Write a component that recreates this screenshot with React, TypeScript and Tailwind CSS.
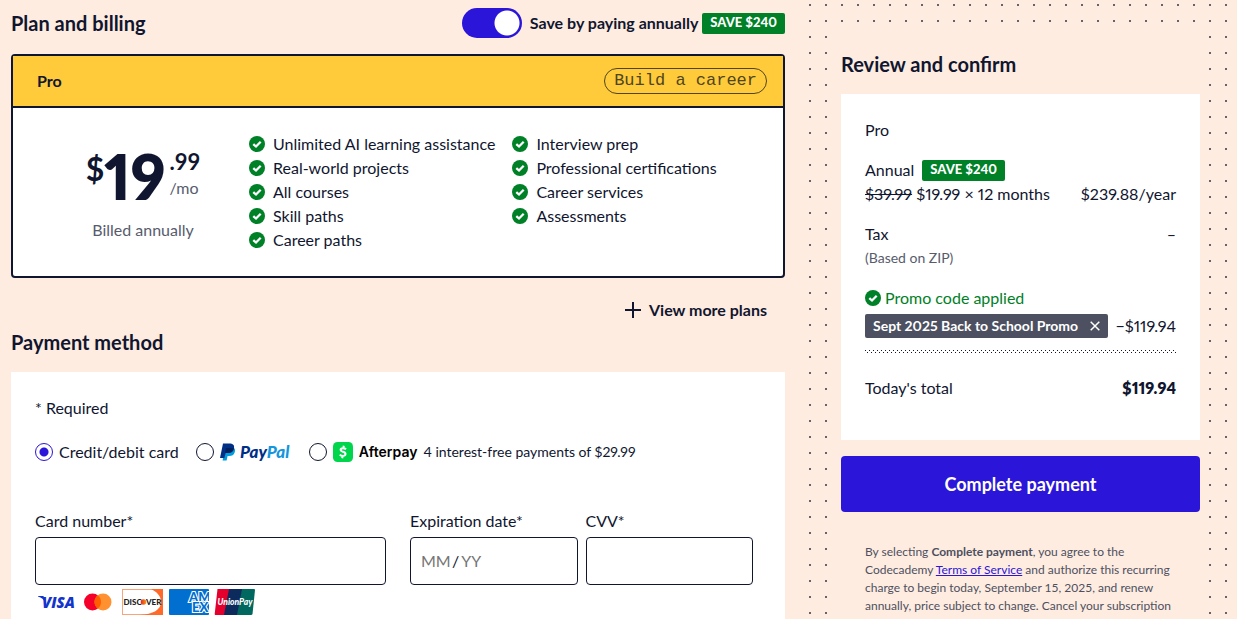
import type { ReactNode } from "react";

const included = [
  ["Unlimited AI learning assistance", "Real-world projects", "All courses", "Skill paths", "Career paths"],
  ["Interview prep", "Professional certifications", "Career services", "Assessments"],
];

function CheckBadge() {
  return (
    <svg className="size-4 shrink-0" viewBox="0 0 16 16" aria-hidden="true">
      <circle cx="8" cy="8" r="8" fill="#008027" />
      <path d="M4.3 8.1 L7 10.5 L11.7 5.7" fill="none" stroke="#fff" strokeWidth="2.3" />
    </svg>
  );
}

function SaveBadge() {
  return (
    <span className="inline-flex h-[21px] items-center rounded-xs bg-[#008027] px-2 pb-0.5 text-[13px] leading-4 font-black whitespace-nowrap text-white proportional-nums">
      SAVE $240
    </span>
  );
}

function Heading({ children }: { children: ReactNode }) {
  return <h2 className="text-xl leading-7 font-bold">{children}</h2>;
}

function BillingToggle() {
  return (
    <div className="flex items-center gap-1">
      <label className="flex items-center gap-2 text-base leading-6 font-bold">
        <input
          type="checkbox"
          role="switch"
          defaultChecked
          className="h-[30px] w-[60px] shrink-0 appearance-none rounded-full bg-[#6a6e75] bg-[radial-gradient(circle_at_15px_15px,white_12px,transparent_13px)] checked:bg-[#2a15d9] checked:bg-[radial-gradient(circle_at_45px_15px,white_12px,transparent_13px)]"
        />
        Save by paying annually
      </label>
      <SaveBadge />
    </div>
  );
}

function PlanCard() {
  return (
    <article className="mt-4 rounded-sm border-2 border-[#10162f] bg-white">
      <header className="flex h-[52px] items-center justify-between border-b-2 border-[#10162f] bg-[#ffcb3a] pr-4 pl-6">
        <h3 className="text-base leading-6 font-bold">Pro</h3>
        <span className="rounded-full border border-[#4f4520] px-[9px] font-['Liberation_Mono',monospace] text-[17px] leading-6 text-[#4f4520]">
          Build a career
        </span>
      </header>
      <div className="flex p-6">
        <div className="flex w-[212px] shrink-0 flex-col items-center pt-3.5">
          <p className="flex h-16 items-start font-bold">
            <span className="text-[32px] leading-[46px]">$</span>
            <span className="text-[62px] leading-[60px] font-extrabold proportional-nums">19</span>
            <span className="ml-1 flex flex-col gap-0.5">
              <span className="text-[22px] leading-8">.99</span>
              <span className="text-base leading-4 font-normal text-[#575c6d]">/mo</span>
            </span>
          </p>
          <p className="mt-2 text-base leading-6 text-[#575c6d]">Billed annually</p>
        </div>
        <div className="flex gap-[17px]">
          {included.map((column) => (
            <ul key={column[0]}>
              {column.map((item) => (
                <li key={item} className="flex items-center gap-2 text-base leading-6">
                  <CheckBadge />
                  {item}
                </li>
              ))}
            </ul>
          ))}
        </div>
      </div>
    </article>
  );
}

function Method({ checked, children }: { checked?: boolean; children: ReactNode }) {
  return (
    <label className="flex items-center gap-1.5">
      <input
        type="radio"
        name="method"
        defaultChecked={checked}
        className="size-[18px] shrink-0 appearance-none rounded-full border border-[#10162f] bg-white checked:border-[#2a15d9] checked:bg-[radial-gradient(circle,#2a15d9_4px,white_5px)]"
      />
      {children}
    </label>
  );
}

function PayPalLogo() {
  return (
    <svg className="h-5 w-[72px]" viewBox="0 0 72 20" role="img" aria-label="PayPal">
      <path d="M5 5 H11 C14.5 5 15.6 7.4 14.8 10 C14 13 11.8 14 9.2 14 H7.6 L6.6 18.5 H2.6 Z" fill="#009cde" />
      <path d="M3 1.500 H9.2 C13 1.500 14.6 3 14 6.2 C13.4 9.6 11 11 7.8 11 H5.6 L4.4 16 H0 Z" fill="#002f86" />
      <path d="M6 6 H12 L13.9 6.4 C13.2 9.6 11 11 7.8 11 H5 Z" fill="#011f5b" />
      <text x="20" y="16" fontFamily="Lato, sans-serif" fontSize="17" fontWeight="900" fontStyle="italic" fill="#002f86">
        Pay<tspan fill="#1496dc">Pal</tspan>
      </text>
    </svg>
  );
}

function CashIcon() {
  return (
    <svg className="size-5" viewBox="0 0 20 20" aria-hidden="true">
      <rect width="20" height="20" rx="4.500" fill="#00d64b" />
      <path
        d="M13 7.2 C11.6 5.9 7.6 5.6 7.6 7.9 C7.6 10.2 12.7 9.2 12.5 12 C12.3 14.5 8.3 14.3 6.800 12.6 M10.8 3.800 L10.4 6 M9.600 14 L9.2 16.2"
        fill="none"
        stroke="#fff"
        strokeWidth="2"
      />
    </svg>
  );
}

function CardBrands() {
  return (
    <svg className="mt-1 h-[26px] w-[220px]" viewBox="0 0 220 26" role="img" aria-label="Visa, Mastercard, Discover, Amex, UnionPay">
      <defs>
        <linearGradient id="orb">
          <stop offset="0" stopColor="#e0241c" />
          <stop offset="1" stopColor="#f79a20" />
        </linearGradient>
        <clipPath id="amex">
          <rect x="134" width="40" height="26" rx="1" />
        </clipPath>
      </defs>
      <path d="M3 7 H8.500 L10.500 14 C9 10.500 6.500 8.500 3 7.500 Z" fill="#1434cb" />
      <text x="7" y="19" fontFamily="Open Sans, sans-serif" fontSize="15" fontWeight="800" fontStyle="italic" fill="#1434cb">
        VISA
      </text>
      <circle cx="57.500" cy="13" r="8.500" fill="#f5002b" />
      <circle cx="68" cy="13" r="8.500" fill="#ff9130" />
      <path d="M62.750 6.300 A8.500 8.500 0 0 1 62.750 19.700 A8.500 8.500 0 0 1 62.750 6.300" fill="#ff5f00" />

      <rect x="87.500" y=".5" width="40" height="25" fill="#fff" stroke="#f9a57c" />
      <path d="M116 0 H128 V26 H105 C118 25 126 21 126 13 C126 7 122 3 116 0 Z" fill="#ff6a2b" />
      <text x="88.500" y="16" fontFamily="Lato, sans-serif" fontSize="8" fontWeight="900" fill="#222">
        DISC
      </text>
      <circle cx="108.500" cy="13" r="2.800" fill="url(#orb)" />
      <text x="111" y="16" fontFamily="Lato, sans-serif" fontSize="8" fontWeight="900" fill="#222">
        VER
      </text>

      <g clipPath="url(#amex)">
        <rect x="134" width="40" height="26" fill="#016fd0" />
        <g fontFamily="Lato, sans-serif" fontSize="13" fontWeight="900" fill="#016fd0" stroke="#fff" strokeWidth="2.200" paintOrder="stroke">
          <text x="154" y="12.500">AM</text>
          <text x="157" y="23">EX</text>
        </g>
      </g>

      <path d="M182.500 0 H195 L190 26 H180.500 Q179.500 26 179.700 25 Z" fill="#e3002c" />
      <path d="M194 0 H208 L203 26 H189 Z" fill="#0c2a5c" />
      <path d="M207 0 H219 Q220 0 220 1 L217.500 25 Q217.300 26 216 26 H202 Z" fill="#00685e" />
      <text x="182.500" y="15.500" fontFamily="Lato, sans-serif" fontSize="8.500" fontWeight="900" fontStyle="italic" fill="#fff">
        UnionPay
      </text>
    </svg>
  );
}

function Field({ id, label }: { id: string; label: string }) {
  return (
    <div className="min-w-0">
      <label htmlFor={id} className="block text-base leading-6">
        {label}
      </label>
      <input id={id} className="mt-1 block h-12 w-full rounded-sm border border-[#10162f] bg-white px-2.5 text-base" />
    </div>
  );
}

function ExpirationField() {
  return (
    <div className="min-w-0">
      <label htmlFor="month" className="block text-base leading-6">
        Expiration date*
      </label>
      <div className="mt-1 flex h-12 items-center rounded-sm border border-[#10162f] bg-white px-2.5 text-base">
        <input id="month" placeholder="MM" className="w-[31px] placeholder:text-[#757575]" />
        <span aria-hidden="true">/</span>
        <input aria-label="Expiration year" placeholder="YY" className="ml-0.5 w-8 placeholder:text-[#757575]" />
      </div>
    </div>
  );
}

function PaymentMethod() {
  return (
    <section className="mt-1.5">
      <Heading>Payment method</Heading>
      <form className="mt-4 bg-white pt-6 pr-8 pb-1 pl-6">
        <p className="text-base leading-6">* Required</p>
        <div className="mt-5 flex h-6 items-center gap-[17px] text-base leading-6 whitespace-nowrap">
          <Method checked>Credit/debit card</Method>
          <Method>
            <PayPalLogo />
          </Method>
          <Method>
            <CashIcon />
            <span className="font-['Inter',sans-serif] text-sm leading-5 font-semibold text-black">Afterpay</span>
            <span className="text-sm leading-5 proportional-nums">4 interest-free payments of $29.99</span>
          </Method>
        </div>
        <div className="mt-[45px] grid grid-cols-[351fr_343fr] gap-6">
          <Field id="card" label="Card number*" />
          <div className="grid grid-cols-2 gap-2">
            <ExpirationField />
            <Field id="cvv" label="CVV*" />
          </div>
        </div>
        <CardBrands />
      </form>
    </section>
  );
}

function OrderSummary() {
  return (
    <div className="mt-4 bg-white px-6 pt-6 pb-10 text-base leading-6 proportional-nums">
      <p>Pro</p>
      <div className="mt-4 flex items-end justify-between">
        <div>
          <p className="flex items-center gap-2">
            Annual <SaveBadge />
          </p>
          <p>
            <s>$39.99</s> $19.99 × 12 months
          </p>
        </div>
        <p>$239.88/year</p>
      </div>
      <div className="mt-4 flex justify-between">
        <div>
          <p>Tax</p>
          <p className="text-sm leading-6 text-[#575c6d]">(Based on ZIP)</p>
        </div>
        <p>–</p>
      </div>
      <p className="mt-4 flex items-center gap-1 text-[#008027]">
        <CheckBadge />
        Promo code applied
      </p>
      <div className="mt-1 flex items-center justify-between whitespace-nowrap">
        <span className="flex h-6 items-center rounded-xs bg-[#4c5061] px-2 text-sm font-bold text-white">
          Sept 2025 Back to School Promo
          <button type="button" aria-label="Remove promo code" className="ml-3">
            <svg className="size-2.5" viewBox="0 0 10 10" aria-hidden="true">
              <path d="M.7 .7 L9.3 9.3 M9.3 .7 L.7 9.3" stroke="#fff" strokeWidth="1.500" />
            </svg>
          </button>
        </span>
        <span>−$119.94</span>
      </div>
      <div className="mt-3 h-[3px] bg-[conic-gradient(from_270deg_at_1px_1px,#10162f_90deg,transparent_0),conic-gradient(from_270deg_at_1px_1px,#10162f_90deg,transparent_0)] bg-[length:4px_4px] bg-[position:0_0,2px_2px]" />
      <div className="mt-[23px] flex justify-between">
        <p>Today's total</p>
        <p className="font-extrabold">$119.94</p>
      </div>
    </div>
  );
}

export default function App() {
  return (
    <div className="grid min-h-screen grid-cols-[minmax(0,1fr)_436px] gap-4 bg-[#ffece0] pl-[11px] font-['Lato',sans-serif] text-[#10162f]">
      <main className="flex flex-col pt-2">
        <div className="flex items-center justify-between">
          <Heading>Plan and billing</Heading>
          <BillingToggle />
        </div>
        <PlanCard />
        <button type="button" className="mt-5 mr-[18px] flex items-center gap-2 self-end text-base leading-6 font-bold">
          <svg className="size-4" viewBox="0 0 16 16" aria-hidden="true">
            <path d="M8 0 V16 M0 8 H16" stroke="#10162f" strokeWidth="2" />
          </svg>
          View more plans
        </button>
        <PaymentMethod />
      </main>
      <aside className="bg-[conic-gradient(from_270deg_at_2px_2px,#66626b_90deg,transparent_0)] bg-[length:16px_16px] bg-[position:8px_4px] pt-8 pr-[29px] pl-8">
        <div className="h-full bg-[#ffece0] px-2 pt-[18px]">
          <Heading>Review and confirm</Heading>
          <OrderSummary />
          <button type="submit" className="mt-4 h-14 w-full rounded-sm bg-[#2a15d9] text-lg font-bold text-white">
            Complete payment
          </button>
          <p className="mt-[31px] px-6 text-xs leading-[18px] text-[#4c5061]">
            By selecting <b>Complete payment</b>, you agree to the Codecademy{" "}
            <a href="#terms" className="text-[#2a15d9] underline">
              Terms of Service
            </a>{" "}
            and authorize this recurring charge to begin today, September 15, 2025, and renew annually, price subject to change.
            Cancel your subscription
          </p>
        </div>
      </aside>
    </div>
  );
}
